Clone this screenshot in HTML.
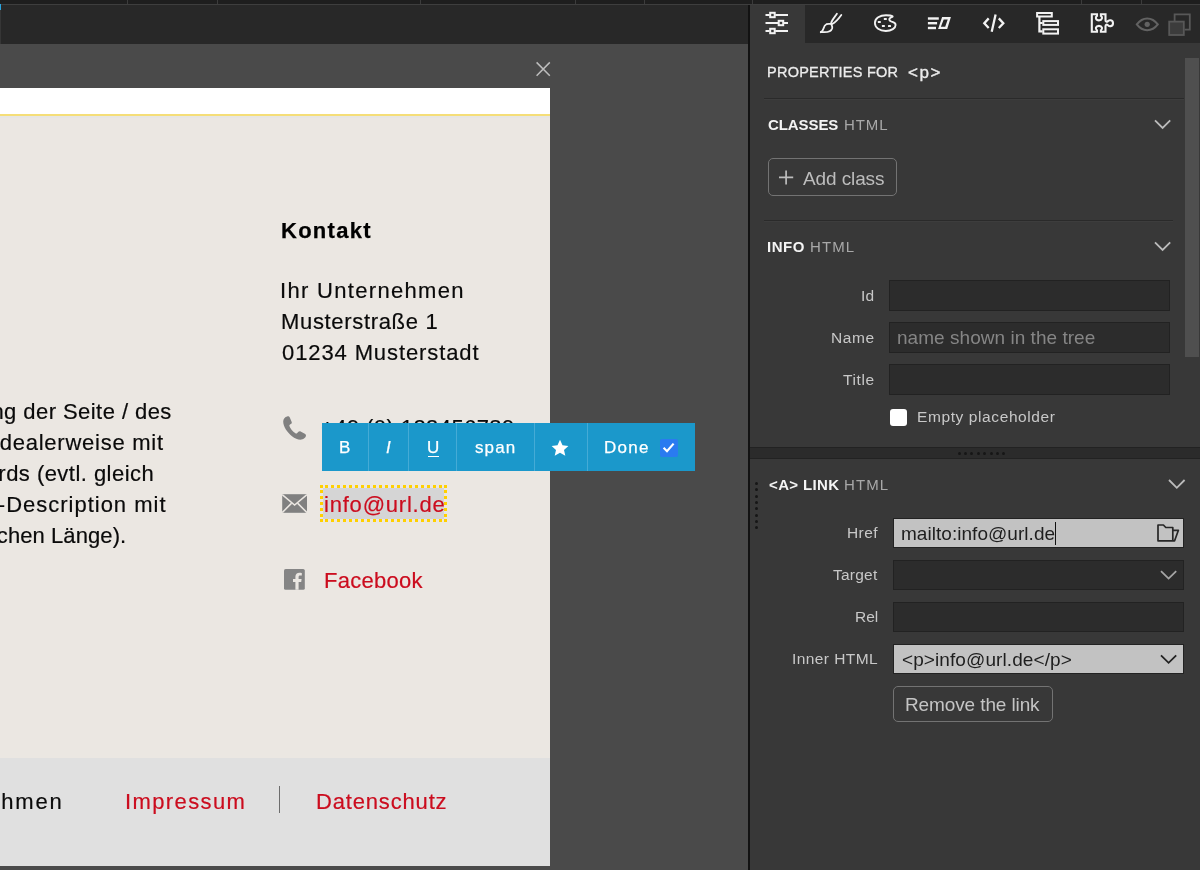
<!DOCTYPE html>
<html lang="de">
<head>
<meta charset="utf-8">
<title>Editor</title>
<style>
*{box-sizing:border-box;margin:0;padding:0}
html,body{width:1200px;height:870px;overflow:hidden;background:#4a4a4a;font-family:"Liberation Sans",sans-serif}
.abs{position:absolute}
#app{position:relative;width:1200px;height:870px;overflow:hidden;background:#4a4a4a}
.t{position:absolute;white-space:nowrap;will-change:transform}
/* top bars */
#top0{left:0;top:0;width:1200px;height:4px;background:#1e1e1e}
#top0 i{position:absolute;top:0;width:1px;height:4px;background:#3c3c3c}
#topline{left:0;top:4px;width:1200px;height:1px;background:#3e3e3e}
#top1{left:0;top:5px;width:749px;height:39px;background:#282828;border-left:1px solid #363636}
#bluetick{left:0;top:4px;width:1px;height:6px;background:#2aa3dd}
/* page */
#pbody{left:0;top:88px;width:550px;height:778px;background:#ebe7e2}
#pwhite{left:0;top:88px;width:550px;height:25.5px;background:#fff}
#pyellow{left:0;top:113.5px;width:550px;height:2.5px;background:#f5de78}
#pgrey{left:0;top:116px;width:550px;height:2px;background:#e7e6e3}
#pfoot{left:0;top:758px;width:550px;height:108px;background:#e0e0e0}
#fdiv{left:279px;top:786px;width:1px;height:27px;background:#6d6d6d}
#sel{left:320px;top:485px;width:127px;height:37px;border:3px dotted #ffd000;background:#d5d5d5;background-clip:padding-box}
/* toolbar */
#tb{left:322px;top:423px;width:373px;height:48px;background:#1b98cb}
#tb i{position:absolute;top:0;width:1px;height:48px;background:#45abd6}
#tbchk{left:660px;top:439px;width:17.5px;height:17.5px;background:#2a7bf0;border-radius:2px}
/* panel */
#panel{left:748px;top:5px;width:452px;height:865px;background:#383838;border-left:2px solid #121212}
#tabs{left:750px;top:5px;width:450px;height:38px;background:#282828}
#tabact{left:750px;top:5px;width:55px;height:39px;background:#383838}
.hr{position:absolute;height:1px;background:#2a2a2a}
.in{position:absolute;background:#2c2c2c;border:1px solid #222}
.inl{position:absolute;background:#c2c2c2;border:1px solid #222}
.btn{position:absolute;border:1px solid #737373;border-radius:5px}
#scroll{left:1185px;top:58px;width:14px;height:299px;background:#4f4f4f}
#split{left:750px;top:447px;width:450px;height:12px;background:#2b2b2b;border-top:1px solid #222;border-bottom:1px solid #222}
.dot{position:absolute;width:3px;height:3px;border-radius:50%;background:#161616}
</style>
</head>
<body>
<div id="app">
  <div class="abs" id="top0"><i style="left:127px"></i><i style="left:217px"></i><i style="left:420px"></i><i style="left:575px"></i><i style="left:644px"></i><i style="left:752px"></i><i style="left:1081px"></i><i style="left:1141px"></i></div>
  <div class="abs" id="topline"></div>
  <div class="abs" id="top1"></div>
  <div class="abs" id="bluetick"></div>

  <!-- close x -->
  <svg class="abs" style="left:534px;top:60px" width="18" height="18" viewBox="534 60 18 18"><path d="M536.6 62.4L549.8 75.8M549.8 62.4L536.6 75.8" stroke="#bdbdbd" stroke-width="1.5" fill="none"/></svg>

  <!-- page preview -->
  <div class="abs" id="pbody"></div>
  <div class="abs" id="pwhite"></div>
  <div class="abs" id="pyellow"></div>
  <div class="abs" id="pgrey"></div>
  <div class="abs" id="pfoot"></div>
  <div class="abs" id="fdiv"></div>
<span class="t " style="left:281.00px;top:215.88px;font-size:22px;line-height:29px;color:#000;letter-spacing:1.273px;font-weight:bold;-webkit-text-stroke:0.25px #000;">Kontakt</span>
<span class="t " style="left:280.00px;top:275.88px;font-size:22px;line-height:29px;color:#0a0a0a;letter-spacing:1.311px;-webkit-text-stroke:0.2px #0a0a0a;">Ihr Unternehmen</span>
<span class="t " style="left:281.00px;top:306.88px;font-size:22px;line-height:29px;color:#0a0a0a;letter-spacing:0.670px;-webkit-text-stroke:0.2px #0a0a0a;">Musterstraße 1</span>
<span class="t " style="left:281.50px;top:337.88px;font-size:22px;line-height:29px;color:#0a0a0a;letter-spacing:0.893px;-webkit-text-stroke:0.2px #0a0a0a;">01234 Musterstadt</span>
<span class="t " style="left:321.00px;top:412.88px;font-size:22px;line-height:29px;color:#0a0a0a;letter-spacing:0.418px;-webkit-text-stroke:0.2px #0a0a0a;">+49 (0) 123456789</span>
<span class="t " style="left:323.50px;top:565.88px;font-size:22px;line-height:29px;color:#cb0c1e;letter-spacing:0.269px;-webkit-text-stroke:0.2px #cb0c1e;">Facebook</span>
<span class="t" style="left:-123.35px;top:396.88px;font-size:22px;line-height:29px;color:#0a0a0a;letter-spacing:0.438px;-webkit-text-stroke:0.2px #0a0a0a;">Beschreibung der Seite / des</span>
<span class="t" style="left:-173.22px;top:427.88px;font-size:22px;line-height:29px;color:#0a0a0a;letter-spacing:0.754px;-webkit-text-stroke:0.2px #0a0a0a;">Unternehmens, idealerweise mit</span>
<span class="t" style="left:-70.18px;top:458.88px;font-size:22px;line-height:29px;color:#0a0a0a;letter-spacing:0.464px;-webkit-text-stroke:0.2px #0a0a0a;">Keywords (evtl. gleich</span>
<span class="t" style="left:-54.77px;top:489.88px;font-size:22px;line-height:29px;color:#0a0a0a;letter-spacing:0.988px;-webkit-text-stroke:0.2px #0a0a0a;">Meta-Description mit</span>
<span class="t" style="left:-76.05px;top:520.88px;font-size:22px;line-height:29px;color:#0a0a0a;letter-spacing:0.083px;-webkit-text-stroke:0.2px #0a0a0a;">der üblichen Länge).</span>
<span class="t" style="left:-154.52px;top:786.88px;font-size:22px;line-height:29px;color:#0a0a0a;letter-spacing:1.834px;-webkit-text-stroke:0.2px #0a0a0a;">© Ihr Unternehmen</span>
<span class="t " style="left:125.00px;top:786.88px;font-size:22px;line-height:29px;color:#cb0c1e;letter-spacing:1.391px;-webkit-text-stroke:0.2px #cb0c1e;">Impressum</span>
<span class="t " style="left:316.40px;top:786.88px;font-size:22px;line-height:29px;color:#cb0c1e;letter-spacing:0.831px;-webkit-text-stroke:0.2px #cb0c1e;">Datenschutz</span>
<svg class="abs" style="left:280px;top:412px" width="30" height="30" viewBox="280 412 30 30"><path fill="#808080" d="M287.2 416.4C285 416.8 283.2 419 283.2 421.6C283.2 427 287.4 432.6 292 436.2C295 438.6 298.6 440 301.6 439.6C304 439.2 305.8 437.6 306 435.6C306 434.8 305.6 434.2 304.8 433.8L300.6 431.4C299.8 431 299 431.2 298.4 431.8L297 433.2C296.6 433.6 296 433.6 295.4 433.2C292.6 431.4 290.4 428.8 289.4 426C289.2 425.4 289.4 425 290 424.6L291.2 423.8C291.8 423.4 292 422.6 291.6 421.8L289.8 417.6C289.4 416.6 288.4 416.2 287.2 416.4Z"/></svg>
<svg class="abs" style="left:280px;top:490px" width="30" height="26" viewBox="280 490 30 26"><rect x="282.2" y="494.2" width="24.8" height="18.6" fill="#808080"/><path d="M282.2 494.6L294.6 505L307 494.6M282.2 512.6L291.4 503.4M307 512.6L297.8 503.4" fill="none" stroke="#ebe7e2" stroke-width="1.5"/></svg>
<svg class="abs" style="left:282px;top:566px" width="26" height="26" viewBox="282 566 26 26"><rect x="284" y="569" width="20.8" height="20.8" rx="1.6" fill="#858585"/><path fill="#ebe7e2" d="M295.4 589.8V582H293V579H295.4V576.8C295.4 574.2 297 572.8 299.4 572.8C300.4 572.8 301.4 572.9 301.8 573V575.6H300.2C298.9 575.6 298.6 576.2 298.6 577.1V579H301.6L301.2 582H298.6V589.8Z"/></svg>

  <div class="abs" id="sel"></div>
<span class="t " style="left:323.50px;top:489.88px;font-size:22px;line-height:29px;color:#cb0c1e;letter-spacing:0.790px;-webkit-text-stroke:0.2px #cb0c1e;">info@url.de</span>

  <!-- inline edit toolbar -->
  <div class="abs" id="tb"><i style="left:46px"></i><i style="left:86px"></i><i style="left:134px"></i><i style="left:212px"></i><i style="left:265px"></i></div>
<span class="t " style="left:339.30px;top:436.81px;font-size:17px;line-height:22px;color:#fff;-webkit-text-stroke:0.25px #fff;">B</span>
<span class="t " style="left:386.30px;top:436.81px;font-size:17px;line-height:22px;color:#fff;font-style:italic;-webkit-text-stroke:0.25px #fff;">I</span>
<span class="t " style="left:426.50px;top:436.81px;font-size:17px;line-height:22px;color:#fff;-webkit-text-stroke:0.25px #fff;">U</span>
<span class="t " style="left:475.30px;top:436.81px;font-size:17px;line-height:22px;color:#fff;letter-spacing:1.097px;-webkit-text-stroke:0.25px #fff;">span</span>
<span class="t " style="left:604.30px;top:437.11px;font-size:17px;line-height:22px;color:#fff;letter-spacing:1.271px;-webkit-text-stroke:0.25px #fff;">Done</span>
  <div class="abs" style="left:427.5px;top:455.5px;width:11.4px;height:1.4px;background:#fff"></div>
  <svg class="abs" style="left:550px;top:438px" width="20" height="20" viewBox="550 438 20 20"><path fill="#fff" d="M560 439.8L562.5 445.3L568.4 445.9L564 449.9L565.3 455.8L560 452.8L554.7 455.8L556 449.9L551.6 445.9L557.5 445.3Z"/></svg>
  <div class="abs" id="tbchk"></div>
  <svg class="abs" style="left:660px;top:439px" width="17" height="17" viewBox="0 0 17 17"><path d="M3.6 8.8L7 12.2L13.6 4.6" stroke="#fff" stroke-width="2.2" fill="none"/></svg>

  <!-- right panel -->
  <div class="abs" id="panel"></div>
  <div class="abs" id="tabs"></div>
  <div class="abs" id="tabact"></div>
<svg class="abs" style="left:750px;top:5px" width="450" height="39" viewBox="750 5 450 39" fill="none" stroke="#f2f2f2" stroke-width="2" stroke-linecap="butt" stroke-linejoin="miter">
  <!-- sliders -->
  <g>
    <path d="M765.5 15H769.6M775.2 15H788M765.5 23H778M783.8 23H788M765.5 31H769.6M775.2 31H788"/>
    <rect x="770.2" y="12.8" width="4.5" height="4.4"/>
    <rect x="778.7" y="20.8" width="4.5" height="4.4"/>
    <rect x="770.2" y="28.8" width="4.5" height="4.4"/>
  </g>
  <!-- brush -->
  <g stroke-linecap="round" stroke-linejoin="round" stroke-width="1.8">
    <path d="M836.9 13.8C834.6 17.2 831.6 20.4 831.2 23C831 25 832.8 26 832.2 28.2C831.4 30.8 828 32.2 824.4 32.2H820.8"/>
    <path d="M841.3 15C838 19.6 835.2 22.6 832.2 24C830 24 828 23.6 826.4 24.2C824.2 25.2 823.8 27.4 823.4 28.8C823 30.4 822.2 31.6 820.8 32.2"/>
  </g>
  <!-- palette -->
  <g stroke-linejoin="round" stroke-width="1.85">
    <path d="M886 15.2C880 15.2 874.9 18.3 874.9 23C874.9 27.6 879.6 31 885.8 31C891.6 31 895.6 28 895.6 24.9C895.6 22.5 893 22.3 891.2 21.5C889.2 20.6 888.7 19.3 889.9 18.2C891 17.2 893.3 17 892.5 16.3C891.5 15.5 889 15.2 886 15.2Z"/>
    <g fill="#f2f2f2" stroke="none"><rect x="883.8" y="17.9" width="3" height="2" rx=".5"/><rect x="877.8" y="21.1" width="3" height="2" rx=".5"/><rect x="881.9" y="25.1" width="3" height="2" rx=".5"/><rect x="888" y="25.1" width="3" height="2" rx=".5"/></g>
  </g>
  <!-- format -->
  <g fill="#f2f2f2" stroke="none">
    <rect x="927.9" y="17.3" width="10.9" height="2.4"/><rect x="927.9" y="22" width="9.2" height="2.4"/><rect x="927.9" y="26.8" width="8.1" height="2.4"/>
    <path fill-rule="evenodd" d="M942.1 17.1H950.9L947.2 29H938.1ZM943.7 19.4H947.7L945.2 26.8H940.9Z"/>
  </g>
  <!-- code -->
  <g stroke-width="2.3">
    <path d="M988.7 18.4L984.3 23.2L988.7 28M995.6 14.4L991.7 31.7M998.8 18.4L1003.3 23.2L998.8 28"/>
  </g>
  <!-- tree -->
  <g stroke-width="2">
    <rect x="1037.1" y="13" width="14.7" height="3.5"/>
    <rect x="1043.3" y="21.1" width="14.7" height="3.8"/>
    <rect x="1043.3" y="29.3" width="14.7" height="4.3"/>
    <path stroke-width="2.2" d="M1039.4 17V31.4H1042.6M1039.4 23H1042.6"/>
  </g>
  <!-- puzzle -->
  <g stroke-width="2.1" stroke-linejoin="miter">
    <path d="M1091.8 14.3H1097V15.8C1095 17 1095.6 20.4 1098.95 20.4C1102.3 20.4 1102.9 17 1100.9 15.8V14.3H1105.5V20.2C1105.5 21.8 1106.8 22 1107.7 21.4C1108.8 19.6 1113 19.6 1113 23.2C1113 26.8 1108.8 26.8 1107.7 25C1106.8 24.4 1105.5 24.6 1105.5 26.2V31.7H1100.9V30.4C1102.9 29.2 1102.3 25.9 1098.95 25.9C1095.6 25.9 1095 29.2 1097 30.4V31.7H1091.8Z"/>
  </g>
  <!-- eye -->
  <g stroke="#626262" stroke-width="2">
    <path d="M1136.8 24.4C1140 20 1143.6 18.4 1147.2 18.4C1150.8 18.4 1154.6 20 1157.8 24.4C1154.6 28.6 1150.8 30.2 1147.2 30.2C1143.6 30.2 1140 28.6 1136.8 24.4Z"/>
    <circle cx="1147.2" cy="24.3" r="2.6" fill="#626262" stroke="none"/>
  </g>
  <!-- copy -->
  <g stroke="#585858" stroke-width="1.8">
    <path d="M1174.6 21V14.4H1189.8V29.6H1184.6"/>
    <rect x="1169.2" y="21.6" width="14.6" height="13.4" fill="#3c3c3c"/>
  </g>
</svg>

  <div class="abs" id="scroll"></div>
  <div class="hr" style="left:764px;top:98px;width:420px"></div>
  <div class="hr" style="left:764px;top:99px;width:420px;background:#3d3d3d"></div>
  <div class="hr" style="left:764px;top:221px;width:409px;background:#3d3d3d"></div>
  <div class="hr" style="left:764px;top:220px;width:409px"></div>
  <!-- chevrons -->
  <svg class="abs" style="left:1150px;top:110px" width="30" height="30" viewBox="1150 110 30 30"><path d="M1155 120.4L1162.6 128L1170.2 120.4" stroke="#bcbcbc" stroke-width="1.8" fill="none"/></svg>
  <svg class="abs" style="left:1150px;top:232px" width="30" height="30" viewBox="1150 232 30 30"><path d="M1155 242.4L1162.6 250L1170.2 242.4" stroke="#bcbcbc" stroke-width="1.8" fill="none"/></svg>
  <svg class="abs" style="left:1160px;top:470px" width="30" height="30" viewBox="1160 470 30 30"><path d="M1169 480L1176.8 487.8L1184.6 480" stroke="#bcbcbc" stroke-width="1.8" fill="none"/></svg>
  <!-- add class -->
  <div class="btn" style="left:768px;top:158px;width:129px;height:38px"></div>
  <svg class="abs" style="left:776px;top:168px" width="20" height="20" viewBox="776 168 20 20"><path d="M779 177.4H793.2M786.1 170.4V184.4" stroke="#bdbdbd" stroke-width="1.7" fill="none"/></svg>
  <!-- info inputs -->
  <div class="in" style="left:889px;top:280px;width:281px;height:31px"></div>
  <div class="in" style="left:889px;top:322px;width:281px;height:31px"></div>
  <div class="in" style="left:889px;top:364px;width:281px;height:31px"></div>
  <div class="abs" style="left:890px;top:409px;width:17px;height:17px;background:#fff;border-radius:3px"></div>
  <!-- splitter -->
  <div class="abs" id="split"></div>
  <!-- link section -->
  <div class="inl" style="left:893px;top:518px;width:291px;height:30px"></div>
  <div class="in" style="left:893px;top:560px;width:291px;height:30px"></div>
  <div class="in" style="left:893px;top:602px;width:291px;height:30px"></div>
  <div class="inl" style="left:893px;top:644px;width:291px;height:30px"></div>
  <div class="btn" style="left:893px;top:686px;width:160px;height:36px"></div>
  <div class="abs" style="left:1055px;top:522px;width:1px;height:23px;background:#111"></div>

  <!-- splitter dots -->
  <i class="dot" style="left:957.6px;top:451.5px"></i><i class="dot" style="left:964.0px;top:451.5px"></i><i class="dot" style="left:970.4px;top:451.5px"></i><i class="dot" style="left:976.8px;top:451.5px"></i><i class="dot" style="left:983.2px;top:451.5px"></i><i class="dot" style="left:989.6px;top:451.5px"></i><i class="dot" style="left:996.0px;top:451.5px"></i><i class="dot" style="left:1002.4px;top:451.5px"></i>
  <i class="dot" style="left:755.2px;top:481.7px"></i><i class="dot" style="left:755.2px;top:488.1px"></i><i class="dot" style="left:755.2px;top:494.5px"></i><i class="dot" style="left:755.2px;top:500.9px"></i><i class="dot" style="left:755.2px;top:507.3px"></i><i class="dot" style="left:755.2px;top:513.7px"></i><i class="dot" style="left:755.2px;top:520.1px"></i><i class="dot" style="left:755.2px;top:526.3px"></i>
  <!-- folder icon -->
  <svg class="abs" style="left:1154px;top:520px" width="28" height="26" viewBox="1154 520 28 26"><path d="M1158 525H1163.4L1165.8 527.5H1172.8V540.8H1158ZM1172.8 530.3H1178.4L1174.6 540.8H1172.8" fill="none" stroke="#262626" stroke-width="1.7" stroke-linejoin="round"/></svg>
  <svg class="abs" style="left:1156px;top:565px" width="26" height="20" viewBox="1156 565 26 20"><path d="M1161 571.2L1168.6 578.6L1176.2 571.2" stroke="#a6a6a6" stroke-width="1.8" fill="none"/></svg>
  <svg class="abs" style="left:1156px;top:649px" width="26" height="20" viewBox="1156 649 26 20"><path d="M1161 655.4L1168.6 662.8L1176.2 655.4" stroke="#222" stroke-width="1.8" fill="none"/></svg>
<span class="t " style="left:767.40px;top:63.48px;font-size:14.5px;line-height:19px;color:#ececec;letter-spacing:0.249px;-webkit-text-stroke:0.3px #ececec;">PROPERTIES FOR</span>
<span class="t " style="left:907.80px;top:61.71px;font-size:17px;line-height:22px;color:#ececec;letter-spacing:1.609px;-webkit-text-stroke:0.35px #ececec;">&lt;p&gt;</span>
<span class="t " style="left:768.00px;top:114.80px;font-size:15px;line-height:20px;color:#f4f4f4;letter-spacing:-0.090px;font-weight:bold;">CLASSES</span>
<span class="t " style="left:844.30px;top:114.80px;font-size:15px;line-height:20px;color:#a8a8a8;letter-spacing:0.937px;">HTML</span>
<span class="t " style="left:767.00px;top:236.80px;font-size:15px;line-height:20px;color:#f4f4f4;letter-spacing:0.546px;font-weight:bold;">INFO</span>
<span class="t " style="left:810.30px;top:236.80px;font-size:15px;line-height:20px;color:#a8a8a8;letter-spacing:1.070px;">HTML</span>
<span class="t " style="left:769.00px;top:474.80px;font-size:15px;line-height:20px;color:#f4f4f4;letter-spacing:0.374px;font-weight:bold;">&lt;A&gt; LINK</span>
<span class="t " style="left:844.20px;top:474.80px;font-size:15px;line-height:20px;color:#a8a8a8;letter-spacing:1.103px;">HTML</span>
<span class="t " style="left:803.30px;top:165.92px;font-size:19px;line-height:25px;color:#bdbdbd;letter-spacing:-0.109px;">Add class</span>
<span class="t " style="left:861.00px;top:285.63px;font-size:15.5px;line-height:20px;color:#c8c8c8;letter-spacing:0.294px;">Id</span>
<span class="t " style="left:831.00px;top:327.63px;font-size:15.5px;line-height:20px;color:#c8c8c8;letter-spacing:0.625px;">Name</span>
<span class="t " style="left:843.00px;top:369.63px;font-size:15.5px;line-height:20px;color:#c8c8c8;letter-spacing:0.628px;">Title</span>
<span class="t " style="left:896.70px;top:325.32px;font-size:19px;line-height:25px;color:#858585;letter-spacing:0.036px;">name shown in the tree</span>
<span class="t " style="left:917.20px;top:406.63px;font-size:15.5px;line-height:20px;color:#c8c8c8;letter-spacing:0.599px;">Empty placeholder</span>
<span class="t " style="left:846.70px;top:523.23px;font-size:15.5px;line-height:20px;color:#c8c8c8;letter-spacing:0.408px;">Href</span>
<span class="t " style="left:833.00px;top:565.23px;font-size:15.5px;line-height:20px;color:#c8c8c8;letter-spacing:0.225px;">Target</span>
<span class="t " style="left:855.30px;top:607.03px;font-size:15.5px;line-height:20px;color:#c8c8c8;letter-spacing:-0.057px;">Rel</span>
<span class="t " style="left:792.00px;top:649.13px;font-size:15.5px;line-height:20px;color:#c8c8c8;letter-spacing:0.421px;">Inner HTML</span>
<span class="t " style="left:900.80px;top:520.92px;font-size:19px;line-height:25px;color:#1e1e1e;letter-spacing:0.039px;">mailto:info@url.de</span>
<span class="t " style="left:901.80px;top:646.72px;font-size:19px;line-height:25px;color:#1e1e1e;letter-spacing:0.091px;">&lt;p&gt;info@url.de&lt;/p&gt;</span>
<span class="t " style="left:904.60px;top:692.22px;font-size:19px;line-height:25px;color:#c4c4c4;letter-spacing:-0.116px;">Remove the link</span>
</div>
</body>
</html>
